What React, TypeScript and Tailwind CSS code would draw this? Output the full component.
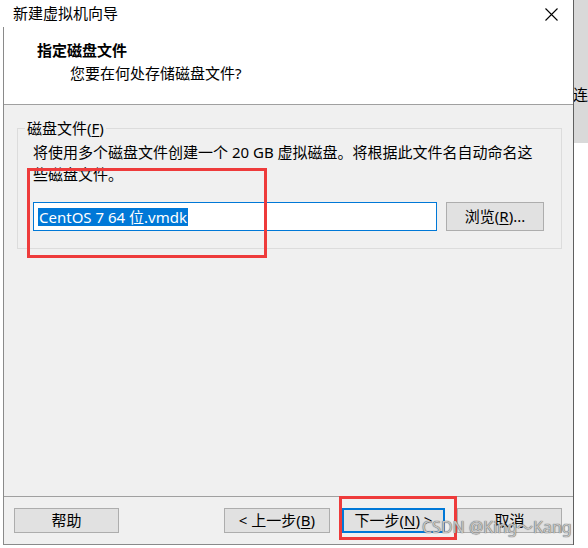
import React from "react";

const font = "font-['Noto_Sans','Noto_Sans_CJK_SC',sans-serif]";

const Btn = ({ children, primary = false, className = "" }: { children: React.ReactNode; primary?: boolean; className?: string }) => (
    <button
        className={`h-[25px] flex items-center justify-center bg-[#e1e1e1] text-[15px] leading-none text-black ${primary ? "border-2 border-[#0078d7]" : "border border-[#adadad]"} ${className}`}
    >
        {children}
    </button>
);

const App = () => {
    return (
        <div className={`relative w-[588px] h-[548px] bg-white flex ${font} text-black overflow-hidden`}>
            {/* dialog */}
            <div className="w-[574px] h-[545px] flex flex-col border-r border-[#5f5f5f]">
                <div className="h-[27px] flex items-center justify-between pl-[13px] pr-[15px] shrink-0">
                    <span className="text-[15px] leading-none">新建虚拟机向导</span>
                    <svg width="13" height="13" viewBox="0 0 13 13" className="mt-[1px]">
                        <path d="M0.5 0.5 L12.5 12.5 M12.5 0.5 L0.5 12.5" stroke="#000" strokeWidth="1.1" fill="none" />
                    </svg>
                </div>
                <div className="flex-1 ml-[3px] border-l border-b border-[#8a8a8a] flex flex-col">
                    <div className="h-[78px] shrink-0 bg-white border-b border-[#a0a0a0] pt-[12px] pl-[33px]">
                        <div className="text-[15px] leading-[23px] font-bold">指定磁盘文件</div>
                        <div className="text-[15px] leading-[23px] pl-[33px]">您要在何处存储磁盘文件?</div>
                    </div>
                    <div className="flex-1 bg-[#f0f0f0] pt-[13px] pl-[13px] pr-[11px]">
                        <fieldset className="border border-[#dcdcdc] pb-[17px]">
                            <legend className="ml-[7px] px-[2px] text-[15px] leading-[20px]">
                                磁盘文件(<span className="underline underline-offset-2">F</span>)
                            </legend>
                            <div className="pl-[15px] pr-[12px]">
                                <div className="text-[15px] leading-[22px] pt-[3px] whitespace-nowrap">
                                    将使用多个磁盘文件创建一个 20 GB 虚拟磁盘。将根据此文件名自动命名这
                                    <br />
                                    些磁盘文件。
                                </div>
                                <div className="flex items-center gap-[9px] mt-[17px]">
                                    <div className="w-[404px] h-[29px] bg-white border border-[#0078d7] flex items-center pl-[4px]">
                                        <span className="bg-[#0078d7] text-white text-[15px] leading-[18px] px-[1px]">CentOS 7 64 位.vmdk</span>
                                    </div>
                                    <Btn className="w-[98px] h-[29px]">
                                        浏览(<span className="underline underline-offset-2">R</span>)...
                                    </Btn>
                                </div>
                            </div>
                        </fieldset>
                    </div>
                    <div className="h-[48px] shrink-0 bg-[#f0f0f0] border-t border-[#a0a0a0] flex items-start pt-[11px] pl-[10px] pr-[11px]">
                        <Btn className="w-[105px]">帮助</Btn>
                        <div className="flex-1" />
                        <div className="flex gap-[12px]">
                            <Btn className="w-[106px]">
                                &lt; 上一步(<span className="underline underline-offset-2">B</span>)
                            </Btn>
                            <Btn primary className="w-[103px]">
                                下一步(<span className="underline underline-offset-2">N</span>) &gt;
                            </Btn>
                            <Btn className="w-[105px]">取消</Btn>
                        </div>
                    </div>
                </div>
            </div>

            {/* window behind, right edge */}
            <div className="w-[14px] flex flex-col">
                <div className="h-[143px] bg-[#d9d9d9] overflow-hidden pt-[84px]">
                    <span className="block text-[15px] leading-[20px] -ml-[1px] whitespace-nowrap">连</span>
                </div>
                <div className="flex-1 bg-white" />
            </div>

            {/* annotations */}
            <div className="absolute left-[27px] top-[168px] w-[240px] h-[90px] border-[3px] border-[#ee3b3b]" />
            <div className="absolute left-[339px] top-[496px] w-[118px] h-[44px] border-[3px] border-[#ee3b3b]" />
            <div className="absolute left-[422px] top-[516px] text-[16px] leading-[22px] text-[#c4c4c4] [text-shadow:0_0_1px_#666,0_0_1px_#666] whitespace-nowrap">
                CSDN @King～Kang
            </div>
        </div>
    );
};

export default App;
